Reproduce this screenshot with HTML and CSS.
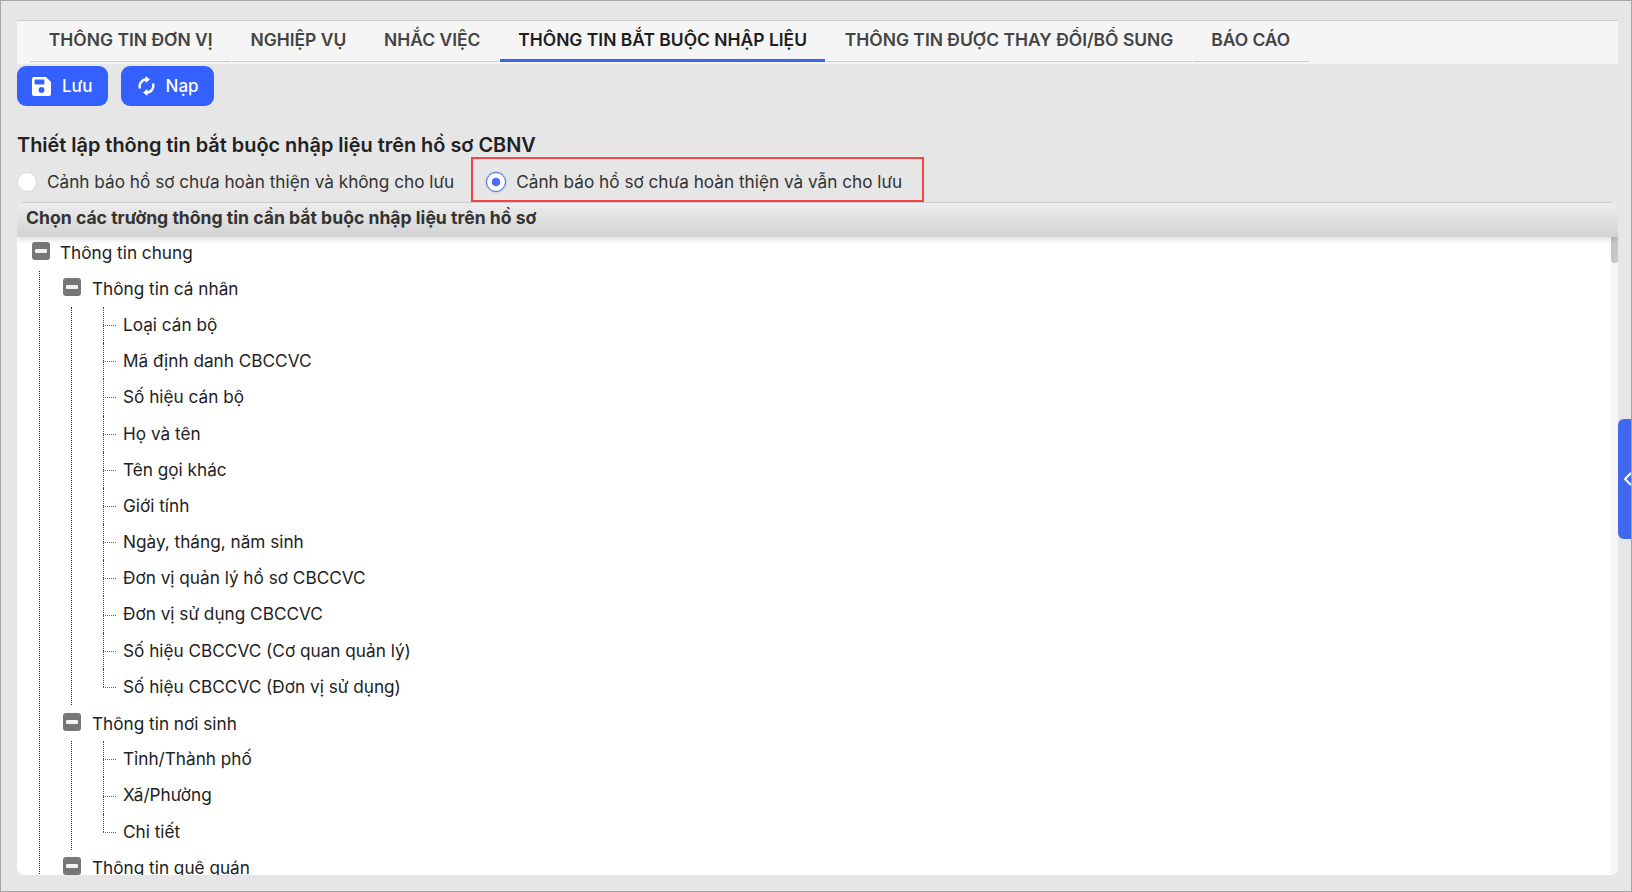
FILE: index.html
```html
<!DOCTYPE html>
<html lang="vi">
<head>
    <meta charset="UTF-8">
    <meta name="viewport" content="width=device-width, initial-scale=1.0">
    <title>Thông tin bắt buộc nhập liệu</title>
    <link rel="stylesheet" href="styles.css">
</head>
<body>
    <div class="page">
        <div class="tabs">
            <a class="tab" href="#">THÔNG TIN ĐƠN VỊ</a>
            <a class="tab" href="#">NGHIỆP VỤ</a>
            <a class="tab" href="#">NHẮC VIỆC</a>
            <a class="tab active" href="#">THÔNG TIN BẮT BUỘC NHẬP LIỆU</a>
            <a class="tab" href="#">THÔNG TIN ĐƯỢC THAY ĐỔI/BỔ SUNG</a>
            <a class="tab" href="#">BÁO CÁO</a>
        </div>

        <div class="toolbar">
            <button class="btn btn-save">
                <svg class="btn-icon" width="19" height="19" viewBox="0 0 19 19">
                    <path fill="#fff" fill-rule="evenodd" d="M2 0h12l5 5v12a2 2 0 0 1-2 2H2a2 2 0 0 1-2-2V2a2 2 0 0 1 2-2zm1.2 2.6a.6.6 0 0 0-.6.6v3.6c0 .3.3.6.6.6h8.6a.6.6 0 0 0 .6-.6V3.2a.6.6 0 0 0-.6-.6zM9.5 10a2.9 2.9 0 1 0 0 5.8 2.9 2.9 0 0 0 0-5.8z"/>
                </svg>
                Lưu
            </button>
            <button class="btn btn-reload">
                <svg class="btn-icon" width="17" height="20" viewBox="0 0 17 20">
                    <path fill="none" stroke="#fff" stroke-width="2.4" d="M2 12.5A7 7 0 0 1 8 3.4M15 7.5a7 7 0 0 1-6 9.1"/>
                    <path fill="#fff" d="M7.6 0v7l4.4-3.5zM9.4 20v-7L5 16.5z"/>
                </svg>
                Nạp
            </button>
        </div>

        <h1 class="title">Thiết lập thông tin bắt buộc nhập liệu trên hồ sơ CBNV</h1>

        <div class="options">
            <label class="option">
                <span class="radio"></span>
                Cảnh báo hồ sơ chưa hoàn thiện và không cho lưu
            </label>
            <label class="option option-marked">
                <span class="radio checked"></span>
                Cảnh báo hồ sơ chưa hoàn thiện và vẫn cho lưu
            </label>
        </div>

        <div class="panel">
            <div class="panel-header">Chọn các trường thông tin cần bắt buộc nhập liệu trên hồ sơ</div>
            <div class="panel-body">
                <div class="tree">
                    <div class="node root-node"><span class="toggle"></span>Thông tin chung</div>
                    <ul class="group-list">
                        <li>
                            <div class="node"><span class="toggle"></span>Thông tin cá nhân</div>
                            <ul class="leaf-list">
                                <li class="leaf">Loại cán bộ</li>
                                <li class="leaf">Mã định danh CBCCVC</li>
                                <li class="leaf">Số hiệu cán bộ</li>
                                <li class="leaf">Họ và tên</li>
                                <li class="leaf">Tên gọi khác</li>
                                <li class="leaf">Giới tính</li>
                                <li class="leaf">Ngày, tháng, năm sinh</li>
                                <li class="leaf">Đơn vị quản lý hồ sơ CBCCVC</li>
                                <li class="leaf">Đơn vị sử dụng CBCCVC</li>
                                <li class="leaf">Số hiệu CBCCVC (Cơ quan quản lý)</li>
                                <li class="leaf">Số hiệu CBCCVC (Đơn vị sử dụng)</li>
                            </ul>
                        </li>
                        <li>
                            <div class="node"><span class="toggle"></span>Thông tin nơi sinh</div>
                            <ul class="leaf-list">
                                <li class="leaf">Tỉnh/Thành phố</li>
                                <li class="leaf">Xã/Phường</li>
                                <li class="leaf">Chi tiết</li>
                            </ul>
                        </li>
                        <li>
                            <div class="node"><span class="toggle"></span>Thông tin quê quán</div>
                        </li>
                    </ul>
                </div>
                <div class="scrollbar"><div class="scrollbar-thumb"></div></div>
            </div>
        </div>

        <div class="side-handle">
            <svg width="9" height="14" viewBox="0 0 9 14">
                <path fill="none" stroke="#fff" stroke-width="2" d="M8 1 2 7l6 6"/>
            </svg>
        </div>
    </div>
</body>
</html>
```

FILE: styles.css
```css
* {
    box-sizing: border-box;
}
body {
    margin: 0;
    font-family: Inter, "Noto Sans", sans-serif;
    color: #222;
}
.page {
    position: relative;
    display: flex;
    flex-direction: column;
    width: 1632px;
    height: 892px;
    padding: 19px 13px 16px 16px;
    overflow: hidden;
    background-color: #e6e6e6;
    border: 1px solid #a6a6a6;
}

/* tabs */
.tabs {
    display: flex;
    flex-shrink: 0;
    gap: 1px;
    height: 44px;
    padding: 0 0 2px 13px;
    background-color: #f5f5f5;
    border-top: 1px solid #ccc;
}
.tab {
    height: 41px;
    padding: 0 18.4px;
    font-size: 17.45px;
    font-weight: 600;
    line-height: 38px;
    color: #444;
    text-decoration: none;
    border-bottom: 1px solid #ccc;
}
.tab:first-child {
    padding-left: 18.8px;
}
.tab.active {
    color: #1e1e1e;
    border-bottom: 3px solid #3f64e8;
}

/* toolbar */
.toolbar {
    display: flex;
    flex-shrink: 0;
    gap: 13px;
    margin-top: 2px;
}
.btn {
    display: flex;
    align-items: center;
    height: 40px;
    padding: 0 15px;
    font-family: inherit;
    font-size: 17px;
    font-weight: 500;
    color: #fff;
    background-color: #3360ff;
    border: none;
    border-radius: 9px;
}
.btn-save .btn-icon {
    margin-right: 11px;
}
.btn-reload {
    padding-left: 17px;
}
.btn-reload .btn-icon {
    margin-right: 11px;
}

.title {
    flex-shrink: 0;
    margin: 26px 0 0;
    font-size: 19.9px;
    font-weight: 600;
    line-height: 26px;
    color: #222;
}

/* radio row */
.options {
    display: flex;
    flex-shrink: 0;
    align-items: center;
    height: 45px;
    margin-top: -1px;
}
.option {
    display: flex;
    align-items: center;
    gap: 10px;
    height: 45px;
    padding-top: 4px;
    font-size: 17.2px;
    color: #333;
}
.option-marked {
    width: 453px;
    margin-left: 17px;
    padding-left: 13px;
    border: 2px solid #f44448;
}
.radio {
    flex-shrink: 0;
    width: 20px;
    height: 20px;
    background-color: #fff;
    border: 1px solid #dcdcdc;
    border-radius: 50%;
}
.radio.checked {
    background: radial-gradient(circle, #4a6ff5 0, #4a6ff5 4px, #fff 4.6px);
    border: 1.5px solid #3f64e8;
    box-shadow: 0 0 2px #8aa0f0;
}

/* panel */
.panel {
    display: flex;
    flex: 1;
    flex-direction: column;
    min-height: 0;
    overflow: hidden;
    border-radius: 8px;
}
.panel-header {
    position: relative;
    z-index: 1;
    flex-shrink: 0;
    height: 35px;
    padding-left: 9px;
    font-size: 17.6px;
    font-weight: 700;
    line-height: 29px;
    color: #333;
    background: linear-gradient(#ededed, #d2d2d2);
    border-top: 1px solid #ccc;
    box-shadow: 0 2px 6px rgba(0, 0, 0, 0.16);
}
.panel-body {
    display: flex;
    flex: 1;
    min-height: 0;
    background-color: #fff;
}
.tree {
    flex: 1;
    margin-top: -2.4px;
    overflow: hidden;
    font-size: 17.2px;
    background-color: #fff;
}
.tree ul {
    padding: 0;
    margin: 0;
    list-style-type: none;
}
.node {
    display: flex;
    align-items: center;
    gap: 11px;
    height: 36.2px;
    padding-left: 23px;
}
.root-node {
    gap: 10px;
    padding-left: 15px;
}
.toggle {
    position: relative;
    flex-shrink: 0;
    width: 18px;
    height: 18px;
    margin-bottom: 3px;
    background-color: #777;
    border-radius: 3px;
}
.toggle::after {
    content: "";
    position: absolute;
    top: 7px;
    left: 3px;
    width: 12px;
    height: 4px;
    background-color: #f2f2f2;
    border-radius: 1px;
}
.tree .group-list {
    margin-left: 22px;
    border-left: 1px dotted #222;
}
.tree .leaf-list {
    margin-left: 31px;
    border-left: 1px dotted #222;
}
.leaf {
    position: relative;
    height: 36.2px;
    margin-left: 31px;
    padding-left: 20px;
    line-height: 36.2px;
}
/* connectors of the tree */
.leaf::before {
    content: "";
    position: absolute;
    top: 0;
    bottom: 0;
    left: 0;
    border-left: 1px dotted #444;
}
.leaf:last-child::before {
    bottom: 50%;
}
.leaf::after {
    content: "";
    position: absolute;
    top: 50%;
    left: 0;
    width: 13px;
    border-top: 1px dotted #666;
}
.scrollbar {
    flex-shrink: 0;
    width: 7px;
    background-color: #f5f5f5;
}
.scrollbar-thumb {
    width: 7px;
    height: 26px;
    background-color: #c6c6c6;
    border-radius: 0 0 3px 3px;
}

/* handle on the right edge */
.side-handle {
    position: absolute;
    top: 418px;
    right: -1px;
    display: flex;
    align-items: center;
    width: 14px;
    height: 120px;
    padding-left: 5px;
    background-color: #4169f0;
    border-radius: 6px 0 0 6px;
}
```
